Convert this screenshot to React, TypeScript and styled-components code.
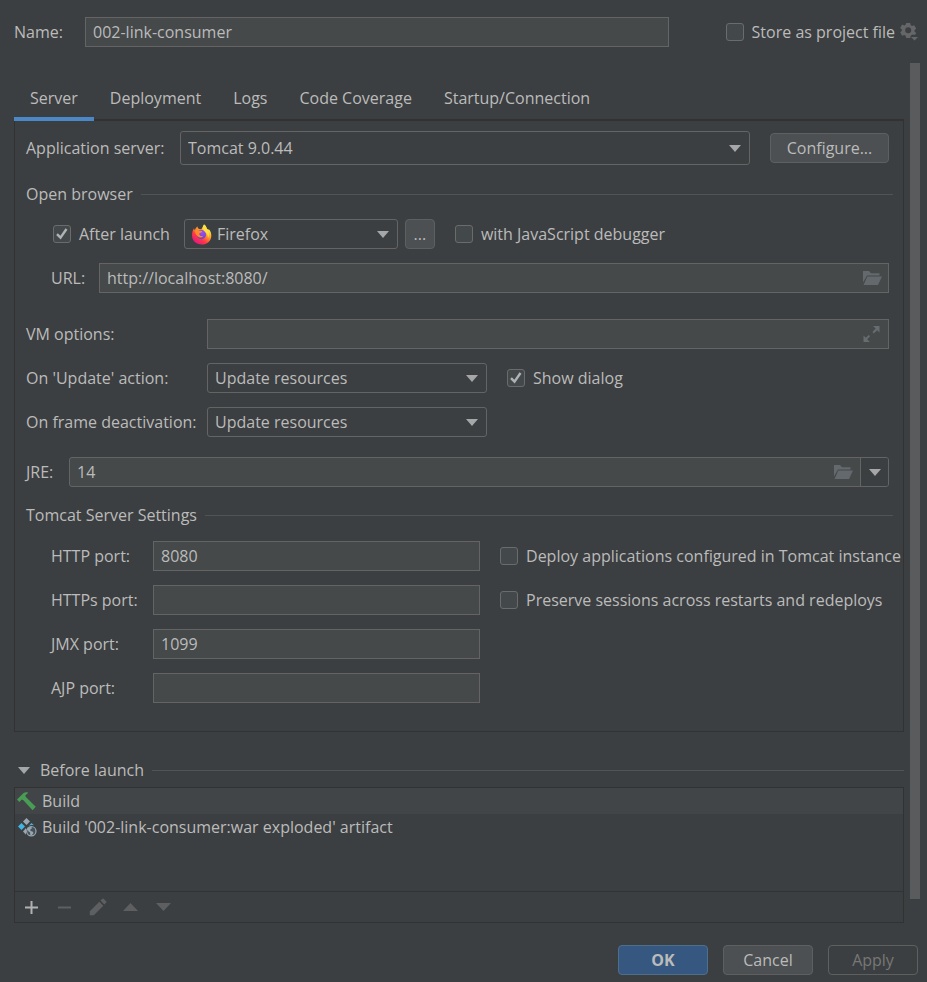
import React from "react";
import styled, { createGlobalStyle, css } from "styled-components";

const color = {
  bg: "#3c3f41",
  text: "#bbbbbb",
  muted: "#777777",
  field: "#45494a",
  fieldBorder: "#646464",
  comboBorder: "#646464",
  line: "#515456",
  dark: "#323232",
  accent: "#4a88c7",
};

const GlobalStyle = createGlobalStyle`
  *, *::before, *::after { box-sizing: border-box; }
  body { margin: 0; background: ${color.bg}; }
  body, button, input, select {
    font-family: "Open Sans", "Noto Sans", sans-serif;
    font-size: 16px;
    line-height: 24px;
    color: ${color.text};
  }
`;

const Dialog = styled.form`
  display: flex;
  flex-direction: column;
  min-height: 100vh;
`;

const TopBar = styled.header`
  display: flex;
  align-items: center;
  height: 63px;
  padding: 0 9px 0 14px;
`;

const TopLabel = styled.label`
  width: 71px;
  flex: none;
`;

const fieldStyle = css`
  height: 30px;
  min-width: 0;
  padding: 0 7px;
  background: ${color.field};
  border: 1px solid ${color.fieldBorder};
  border-radius: 0;
  outline: none;
`;

const TextField = styled.input`
  ${fieldStyle}
  width: 100%;
`;

const NameField = styled.input`
  ${fieldStyle}
  flex: 1;
  margin-right: 57px;
`;

const CheckLabel = styled.label`
  display: flex;
  align-items: center;
  gap: 8px;
  white-space: nowrap;
`;

const CheckFrame = styled.span`
  display: grid;
  flex: none;
  width: 18px;
  height: 18px;
  > * { grid-area: 1 / 1; }
  > svg { visibility: hidden; pointer-events: none; }
  > input:checked + svg { visibility: visible; }
`;

const CheckInput = styled.input`
  appearance: none;
  width: 18px;
  height: 18px;
  margin: 0;
  background: #43494a;
  border: 1px solid #6b6b6b;
  border-radius: 3px;
`;

const GearButton = styled.button`
  display: flex;
  padding: 0;
  margin-left: 5px;
  background: none;
  border: 0;
`;

const Body = styled.div`
  display: flex;
  gap: 6px;
  padding: 0 7px 0 14px;
`;

const Content = styled.main`
  flex: 1;
  min-width: 0;
  padding-top: 16px;
`;

const ScrollBar = styled.div`
  width: 10px;
  margin-bottom: 24px;
  background: #595b5d;
`;

const Tabs = styled.nav`
  display: flex;
  height: 42px;
  box-shadow: inset 0 -2px ${color.dark};
`;

const Tab = styled.button<{ $active?: boolean }>`
  padding: 0 16px;
  background: none;
  border: 0;
  border-bottom: 4px solid ${(p) => (p.$active ? color.accent : "transparent")};
`;

const Panel = styled.section`
  display: flex;
  flex-direction: column;
  padding: 10px 2px 28px 11px;
  border: 1px solid ${color.dark};
  border-top: 0;
`;

const Row = styled.div<{ $top?: number; $indent?: number }>`
  display: flex;
  align-items: center;
  margin-top: ${(p) => p.$top ?? 0}px;
  padding: 0 12px 0 ${(p) => p.$indent ?? 0}px;
`;

const Label = styled.label<{ $width: number }>`
  flex: none;
  width: ${(p) => p.$width}px;
  white-space: nowrap;
`;

const Heading = styled.h2<{ $top: number; $right?: number }>`
  display: flex;
  align-items: center;
  gap: 8px;
  margin: ${(p) => p.$top}px ${(p) => p.$right ?? 0}px 0 0;
  font-size: 16px;
  font-weight: 400;
  line-height: 24px;
  &::after {
    content: "";
    flex: 1;
    height: 1px;
    background: ${color.line};
  }
`;

const ComboFrame = styled.span<{ $width?: number }>`
  position: relative;
  display: flex;
  min-width: 0;
  ${(p) => (p.$width ? `width: ${p.$width}px;` : "flex: 1;")}
`;

const ComboSelect = styled.select<{ $tall?: boolean; $icon?: boolean }>`
  appearance: none;
  width: 100%;
  height: ${(p) => (p.$tall ? 34 : 30)}px;
  padding: 0 30px 0 ${(p) => (p.$icon ? 32 : 7)}px;
  background: ${color.bg};
  border: 1px solid ${color.comboBorder};
  border-radius: 3px;
  outline: none;
`;

const ComboArrow = styled.span`
  position: absolute;
  right: 9px;
  top: 0;
  bottom: 0;
  display: flex;
  align-items: center;
  pointer-events: none;
`;

const ComboIcon = styled.span`
  position: absolute;
  left: 7px;
  top: 0;
  bottom: 0;
  display: flex;
  align-items: center;
  pointer-events: none;
`;

const Button = styled.button<{ $kind?: "primary" | "disabled"; $width: number }>`
  width: ${(p) => p.$width}px;
  height: 30px;
  flex: none;
  padding: 0;
  border-radius: 4px;
  border: 1px solid #5e6060;
  background: #4c5052;
  ${(p) =>
    p.$kind === "primary" &&
    css`
      background: #365880;
      border-color: #4c708c;
      font-weight: 700;
    `}
  ${(p) =>
    p.$kind === "disabled" &&
    css`
      background: transparent;
      color: ${color.muted};
    `}
`;

const ButtonSlot = styled.div<{ $left: number; $right?: number }>`
  display: flex;
  margin: 0 ${(p) => p.$right ?? 0}px 0 ${(p) => p.$left}px;
`;

const FieldBox = styled.div<{ $combo?: boolean }>`
  ${fieldStyle}
  display: flex;
  flex: 1;
  padding-right: ${(p) => (p.$combo ? 0 : 6)}px;
  border-radius: ${(p) => (p.$combo ? 3 : 0)}px;
`;

const BareInput = styled.input`
  flex: 1;
  min-width: 0;
  padding: 0;
  background: none;
  border: 0;
  outline: none;
`;

const IconButton = styled.button`
  display: flex;
  align-items: center;
  justify-content: center;
  padding: 0;
  background: none;
  border: 0;
`;

const DropButton = styled(IconButton)`
  width: 28px;
  margin-left: 7px;
  background: ${color.bg};
  border-left: 1px solid ${color.fieldBorder};
  border-radius: 0 2px 2px 0;
`;

const Ports = styled.div`
  display: grid;
  grid-template-columns: 102px minmax(0, 1fr) max-content;
  grid-auto-rows: 30px;
  row-gap: 14px;
  align-items: center;
  margin-top: 14px;
  padding-left: 25px;
`;

const PortOption = styled.div`
  grid-column: 3;
  padding-left: 20px;
`;

const PortField = styled(TextField)`
  grid-column: 2;
`;

const PortLabel = styled.label`
  grid-column: 1;
`;

const Fold = styled.button`
  display: flex;
  align-items: center;
  gap: 10px;
  padding: 0 0 0 4px;
  background: none;
  border: 0;
`;

const TaskBox = styled.section`
  margin-top: 5px;
  border: 1px solid ${color.dark};
`;

const TaskList = styled.ul`
  height: 103px;
  margin: 0;
  padding: 0;
  list-style: none;
`;

const Task = styled.li<{ $selected?: boolean }>`
  display: flex;
  align-items: center;
  gap: 5px;
  height: 26px;
  padding: 0 2px;
  background: ${(p) => (p.$selected ? "#414547" : "transparent")};
`;

const Toolbar = styled.div`
  display: flex;
  align-items: center;
  gap: 12px;
  height: 31px;
  padding-left: 6px;
  border-top: 1px solid ${color.dark};
`;

const ToolButton = styled(IconButton)`
  width: 21px;
  height: 22px;
`;

const Footer = styled.footer`
  display: flex;
  justify-content: flex-end;
  gap: 15px;
  padding: 22px 9px 7px;
`;

const Triangle = ({ fill = "#a5a7a9", up = false, large = false }: { fill?: string; up?: boolean; large?: boolean }) => (
  <svg width={large ? 15 : 12} height={large ? 8 : 7} viewBox="0 0 12 7" preserveAspectRatio="none" aria-hidden>
    <path d={up ? "M0 7h12L6 0z" : "M0 0h12L6 7z"} fill={fill} />
  </svg>
);

const FolderIcon = () => (
  <svg width="20" height="16" viewBox="0 0 20 16" aria-hidden>
    <path d="M1 12.5V1h6l2 2.2h8.500V5.500H5z" fill="#63696c" />
    <path d="M5.300 6.500H20L16 15H1.600z" fill="#63696c" />
  </svg>
);

const ExpandIcon = () => (
  <svg width="20" height="18" viewBox="0 0 20 18" aria-hidden>
    <path
      d="M11 1h6.500v6.500l-2.300-2.200-3.500 3.100-1.300-1.300 3.300-3.500zM1.500 10.500l2.300 2.300 3-2.900 1.300 1.300-2.900 3.100L7.700 17H1.500z"
      fill="#676c6f"
    />
  </svg>
);

const GearIcon = () => (
  <svg width="18" height="19" viewBox="0 0 18 19" aria-hidden>
    <g fill="#646668">
      <path
        fillRule="evenodd"
        d="M6.200 1h4l.5 2.300 1.300.7 2.200-.8 2 3.300-1.700 1.700v1.400l1.700 1.500-1 1.700H12l-1.300.9-.5 2.300h-4l-.6-2.300-1.300-.8-2.200.8-1.900-3.400 1.700-1.500V7.400L.2 5.900l1.900-3.300 2.200.8 1.300-.7zM8.200 5.200a3 3 0 1 0 0 6 3 3 0 0 0 0-6z"
      />
      <path d="M11 15h7l-3.500 3.500z" />
    </g>
  </svg>
);

const FirefoxIcon = () => (
  <svg width="21" height="21" viewBox="0 0 21 21" aria-hidden>
    <defs>
      <linearGradient id="fx-body" x1="0.850" y1="0.050" x2="0.200" y2="0.950">
        <stop offset="0.100" stopColor="#fff44f" />
        <stop offset="0.400" stopColor="#ff9a2b" />
        <stop offset="0.700" stopColor="#ff3647" />
        <stop offset="1" stopColor="#e31587" />
      </linearGradient>
      <radialGradient id="fx-core" cx="0.600" cy="0.300" r="0.800">
        <stop offset="0" stopColor="#a04df5" />
        <stop offset="1" stopColor="#5a45c8" />
      </radialGradient>
    </defs>
    <path
      d="M13 .5c1.600 1 2.300 2.400 2.700 3.900.8.300 1.200.9 1.600 1.700.2-.3.300-.6.300-1 2 2 2.900 4.400 2.700 7.100C20 17 16 20.500 10.800 20.500 5 20.500 1 16.500 1 11.200c0-3 .8-5 2-7l.7 2C4.500 4.300 5.500 3.200 6.500 2.500c0 1.200.6 2 1.500 2.600l2.500.2C11.200 3.600 12 2.400 13 .5z"
      fill="url(#fx-body)"
    />
    <path d="M7.500 6.500C9.500 5.200 13 5.700 14.500 8.500c1.300 3-.2 6-3.500 6.500-3 .4-5.200-1.600-5-4.300z" fill="url(#fx-core)" />
    <path
      d="M3.600 6.300c1.500-1 3-.7 4.500.2l3.100.5c0 1-.9 1.700-2.500 2-.7.600-.4 1.600.3 2.500.8.900 2.200.6 3.300.2-1 2.100-4 2.400-5.700.6C4.500 10.400 4 8.500 3.600 6.300z"
      fill="#ff8a24"
    />
    <path d="M13 .5c1.600 1 2.300 2.400 2.700 3.900C18.500 7 18.500 11.500 17 14c0-3.500-1.500-5-3.300-6.600C12.500 6 11.300 4 13 .5z" fill="#ffe042" />
  </svg>
);

const HammerIcon = () => (
  <svg width="20" height="19" viewBox="0 0 20 19" aria-hidden>
    <path d="M0 7.600 6.300 1.200C8 .2 9.600.2 11.300.7L8.200 3.600l.9 1.700 9.700 9.500-3.200 3.500-9.200-10-1.700-.8-2.200 2.600z" fill="#499c54" />
  </svg>
);

const ArtifactIcon = () => (
  <svg width="20" height="19" viewBox="0 0 20 19" aria-hidden>
    <path d="M9.500 0 13 3.500 9.500 7 6 3.500z" fill="#9aa7b0" />
    <path d="M4.500 5 8 8.500 4.500 12 1 8.500z" fill="#40b6e0" />
    <path d="M14.500 5 17 7.200c-2.300-.6-4-.3-5.500.8z" fill="#40b6e0" />
    <path d="M9 10v6.800L6 13.400z" fill="#9aa7b0" />
    <circle cx="14.300" cy="13.200" r="4.700" fill="#46525a" stroke="#9aa7b0" strokeWidth="1.200" />
    <path d="M10 11.500c.8-1.700 2.300-2.700 4.300-2.700l.7 1.500-1.700 1.200.2 1.500 2 .6 1 1.400-1.700 2.300-1.500-.2-.2-2.500-1.500-1z" fill="#9aa7b0" />
  </svg>
);

const PlusIcon = () => (
  <svg width="13" height="13" viewBox="0 0 13 13" aria-hidden>
    <path d="M5.500 0h2v5.500H13v2H7.500V13h-2V7.500H0v-2h5.500z" fill="#afb1b3" />
  </svg>
);

const MinusIcon = () => (
  <svg width="13" height="3" viewBox="0 0 13 3" aria-hidden>
    <path d="M0 .5h13v2H0z" fill="#5d5f61" />
  </svg>
);

const PencilIcon = () => (
  <svg width="18" height="18" viewBox="0 0 18 18" aria-hidden>
    <path d="M.8 17.200v-4L10.300 3.700l4 4-9.500 9.500zM11.500 2.500 13.400.7q.6-.5 1.200 0l2.700 2.700q.5.600 0 1.200l-1.900 1.900z" fill="#5d5f61" />
  </svg>
);

function Check({ label, checked }: { label: string; checked?: boolean }) {
  return (
    <CheckLabel>
      <CheckFrame>
        <CheckInput type="checkbox" defaultChecked={checked} />
        <svg width="18" height="18" viewBox="0 0 18 18" aria-hidden>
          <path d="M4 9.200 7.500 12.700 13.500 4" fill="none" stroke="#b0b2b3" strokeWidth="2.400" />
        </svg>
      </CheckFrame>
      {label}
    </CheckLabel>
  );
}

type ComboProps = { id?: string; value: string; width?: number; tall?: boolean; icon?: React.ReactNode; name?: string };

function Combo({ id, value, width, tall, icon, name }: ComboProps) {
  return (
    <ComboFrame $width={width}>
      <ComboSelect id={id} aria-label={name} $tall={tall} $icon={!!icon}>
        <option>{value}</option>
      </ComboSelect>
      {icon && <ComboIcon>{icon}</ComboIcon>}
      <ComboArrow>
        <Triangle />
      </ComboArrow>
    </ComboFrame>
  );
}

const tabs = ["Server", "Deployment", "Logs", "Code Coverage", "Startup/Connection"];

const ports = [
  { id: "http", label: "HTTP port:", value: "8080", option: "Deploy applications configured in Tomcat instance" },
  { id: "https", label: "HTTPs port:", value: "", option: "Preserve sessions across restarts and redeploys" },
  { id: "jmx", label: "JMX port:", value: "1099" },
  { id: "ajp", label: "AJP port:", value: "" },
];

const Spacer = styled.span<{ $width: number }>`
  flex: none;
  width: ${(p) => p.$width}px;
`;

export default function App() {
  return (
    <>
      <GlobalStyle />
      <Dialog onSubmit={(e) => e.preventDefault()}>
        <TopBar>
          <TopLabel htmlFor="name">Name:</TopLabel>
          <NameField id="name" defaultValue="002-link-consumer" />
          <Check label="Store as project file" />
          <GearButton type="button" aria-label="Storage options">
            <GearIcon />
          </GearButton>
        </TopBar>

        <Body>
          <Content>
            <Tabs>
              {tabs.map((tab, i) => (
                <Tab key={tab} type="button" $active={i === 0}>
                  {tab}
                </Tab>
              ))}
            </Tabs>

            <Panel>
              <Row>
                <Label $width={154} htmlFor="server">Application server:</Label>
                <Combo id="server" value="Tomcat 9.0.44" tall />
                <ButtonSlot $left={20}>
                  <Button type="button" $width={119}>Configure...</Button>
                </ButtonSlot>
              </Row>

              <Heading $top={17} $right={8}>Open browser</Heading>
              <Row $top={13} $indent={27}>
                <Check label="After launch" checked />
                <Spacer $width={14} />
                <Combo name="Browser" value="Firefox" width={214} icon={<FirefoxIcon />} />
                <ButtonSlot $left={7} $right={20}>
                  <Button type="button" $width={30}>...</Button>
                </ButtonSlot>
                <Check label="with JavaScript debugger" />
              </Row>
              <Row $top={14} $indent={25}>
                <Label $width={48} htmlFor="url">URL:</Label>
                <FieldBox>
                  <BareInput id="url" defaultValue="http://localhost:8080/" />
                  <IconButton type="button" aria-label="Browse URL">
                    <FolderIcon />
                  </IconButton>
                </FieldBox>
              </Row>

              <Row $top={26}>
                <Label $width={181} htmlFor="vm">VM options:</Label>
                <FieldBox>
                  <BareInput id="vm" />
                  <IconButton type="button" aria-label="Expand">
                    <ExpandIcon />
                  </IconButton>
                </FieldBox>
              </Row>
              <Row $top={14}>
                <Label $width={181} htmlFor="update">On 'Update' action:</Label>
                <Combo id="update" value="Update resources" width={280} />
                <Spacer $width={20} />
                <Check label="Show dialog" checked />
              </Row>
              <Row $top={14}>
                <Label $width={181} htmlFor="frame">On frame deactivation:</Label>
                <Combo id="frame" value="Update resources" width={280} />
              </Row>
              <Row $top={20}>
                <Label $width={43} htmlFor="jre">JRE:</Label>
                <FieldBox $combo>
                  <BareInput id="jre" defaultValue="14" />
                  <IconButton type="button" aria-label="Browse JRE">
                    <FolderIcon />
                  </IconButton>
                  <DropButton type="button" aria-label="Choose JRE">
                    <Triangle />
                  </DropButton>
                </FieldBox>
              </Row>

              <Heading $top={16} $right={8}>Tomcat Server Settings</Heading>
              <Ports>
                {ports.map((port) => (
                  <React.Fragment key={port.id}>
                    <PortLabel htmlFor={port.id}>{port.label}</PortLabel>
                    <PortField id={port.id} defaultValue={port.value} />
                    {port.option && (
                      <PortOption>
                        <Check label={port.option} />
                      </PortOption>
                    )}
                  </React.Fragment>
                ))}
              </Ports>
            </Panel>

            <Heading $top={26}>
              <Fold type="button">
                <Triangle />
                Before launch
              </Fold>
            </Heading>
            <TaskBox>
              <TaskList>
                <Task $selected>
                  <HammerIcon />
                  Build
                </Task>
                <Task>
                  <ArtifactIcon />
                  Build '002-link-consumer:war exploded' artifact
                </Task>
              </TaskList>
              <Toolbar>
                <ToolButton type="button" aria-label="Add"><PlusIcon /></ToolButton>
                <ToolButton type="button" aria-label="Remove" disabled><MinusIcon /></ToolButton>
                <ToolButton type="button" aria-label="Edit" disabled><PencilIcon /></ToolButton>
                <ToolButton type="button" aria-label="Move up" disabled><Triangle up large fill="#5d5f61" /></ToolButton>
                <ToolButton type="button" aria-label="Move down" disabled><Triangle large fill="#5d5f61" /></ToolButton>
              </Toolbar>
            </TaskBox>
          </Content>
          <ScrollBar />
        </Body>

        <Footer>
          <Button type="submit" $width={90} $kind="primary">OK</Button>
          <Button type="button" $width={90}>Cancel</Button>
          <Button type="button" $width={90} $kind="disabled" disabled>Apply</Button>
        </Footer>
      </Dialog>
    </>
  );
}
